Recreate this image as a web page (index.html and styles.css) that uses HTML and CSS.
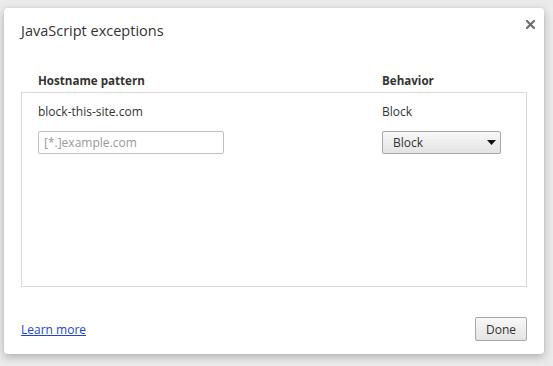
FILE: index.html
```html
<!DOCTYPE html>
<html>
<head>
<meta charset="utf-8">
<link rel="stylesheet" href="styles.css">
</head>
<body>
<div class="backdrop">
  <div class="dialog">
    <div class="title-bar">
      <h1 class="title">JavaScript exceptions</h1>
      <span class="close" aria-label="close">
        <svg width="9" height="9" viewBox="0 0 9 9"><path d="M1 1L8 8M8 1L1 8" stroke="#6f6f6f" stroke-width="2.2" stroke-linecap="square"/></svg>
      </span>
    </div>
    <div class="content">
      <div class="col-heads">
        <span class="col-host">Hostname pattern</span>
        <span class="col-beh">Behavior</span>
      </div>
      <div class="list">
        <div class="row">
          <span class="col-host">block-this-site.com</span>
          <span class="col-beh">Block</span>
        </div>
        <div class="row row-edit">
          <span class="col-host"><input class="host-input" type="text" placeholder="[*.]example.com"></span>
          <span class="col-beh">
            <span class="select"><span>Block</span><svg width="9" height="5" viewBox="0 0 9 5"><path d="M0 0H9L4.5 5Z" fill="#111"/></svg></span>
          </span>
        </div>
      </div>
    </div>
    <div class="footer">
      <a class="learn" href="#">Learn more</a>
      <button class="done">Done</button>
    </div>
  </div>
</div>
</body>
</html>
```

FILE: styles.css
```css
* { box-sizing: border-box; }
html, body { margin: 0; padding: 0; }
body {
  width: 553px;
  height: 366px;
  background: #ebebeb;
  font-family: "Open Sans", "DejaVu Sans", sans-serif;
  font-size: 12px;
  color: #333;
  overflow: hidden;
}
.backdrop {
  padding: 8px 9px 12px 4px;
  height: 366px;
}
.dialog {
  width: 540px;
  height: 346px;
  background: #fff;
  border-radius: 3px;
  box-shadow: 0 3px 8px rgba(0,0,0,0.25), 0 0 1px rgba(0,0,0,0.2);
  display: flex;
  flex-direction: column;
  padding: 0 17px 0 17px;
}
.title-bar {
  display: flex;
  justify-content: space-between;
  align-items: flex-start;
  height: 56px;
}
.title {
  margin: 13px 0 0 0;
  font-size: 14.5px;
  font-weight: normal;
  color: #333;
  line-height: 19px;
}
.close {
  margin-top: 12px;
  margin-right: -8px;
  display: block;
  width: 9px; height: 9px;
}
.close svg { display: block; }
.content { flex: 1; }
.col-heads {
  display: flex;
  font-weight: bold;
  font-size: 11.6px;
  height: 29px;
  line-height: 17px;
  padding-top: 9px;
  padding-left: 17px;
}
.col-host { width: 344px; flex: none; }
.col-beh { flex: 1; }
.list {
  border: 1px solid #d9d9d9;
  height: 195px;
  padding: 6px 0 0 16px;
}
.row {
  display: flex;
  align-items: center;
  height: 24px;
}
.row-edit { margin-top: 7px; height: 24px; }
.host-input {
  width: 186px;
  height: 23px;
  border: 1px solid #bfbfbf;
  border-radius: 2px;
  font: inherit;
  padding: 0 5px;
  margin: 0;
  color: #333;
}
.host-input::placeholder { color: #999; }
.select {
  display: flex;
  align-items: center;
  justify-content: space-between;
  width: 119px;
  height: 23px;
  border: 1px solid #a8a8a8;
  border-radius: 2px;
  background: linear-gradient(#f8f8f8, #e3e3e3);
  padding: 0 4px 0 10px;
  color: #333;
}
.select svg { display: block; }
.footer {
  height: 67px;
  display: flex;
  justify-content: space-between;
  align-items: center;
  padding-top: 17px;
}
.learn {
  color: #1a47d8;
  text-decoration: underline;
}
.done {
  font: inherit;
  color: #333;
  width: 52px;
  height: 24px;
  border: 1px solid #a8a8a8;
  border-radius: 2px;
  background: linear-gradient(#f8f8f8, #e3e3e3);
  margin: 0;
  padding: 0;
}
```
